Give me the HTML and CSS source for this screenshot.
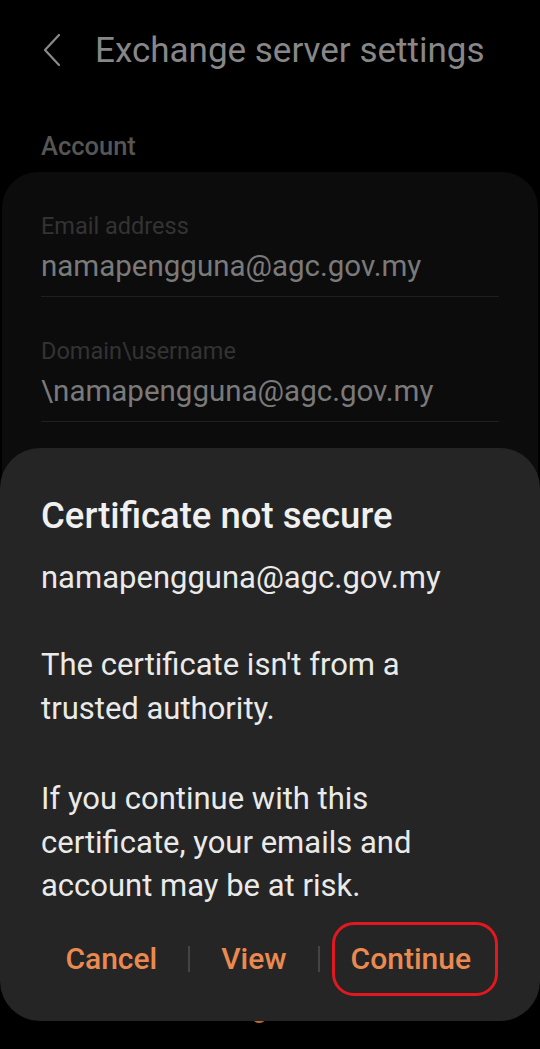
FILE: index.html
```html
<!DOCTYPE html>
<html lang="en">
<head>
<meta charset="utf-8">
<title>Exchange server settings</title>
<link rel="stylesheet" href="styles.css">
</head>
<body>
<div class="screen">
  <header class="appbar">
    <svg class="back" width="24" height="34" viewBox="0 0 24 34" aria-hidden="true">
      <path d="M19 2 L5 17 L19 32" fill="none" stroke="#8a8a8a" stroke-width="2.2" stroke-linecap="round" stroke-linejoin="round"/>
    </svg>
    <h1 class="title">Exchange server settings</h1>
  </header>

  <div class="section-label">Account</div>

  <section class="card">
    <div class="field">
      <div class="field-label">Email address</div>
      <div class="field-value">namapengguna@agc.gov.my</div>
    </div>
    <div class="field">
      <div class="field-label">Domain\username</div>
      <div class="field-value">\namapengguna@agc.gov.my</div>
    </div>
  </section>

  <div class="behind-link">Sign in</div>

  <div class="dialog" role="dialog">
    <h2 class="dialog-title">Certificate not secure</h2>
    <p class="dialog-email">namapengguna@agc.gov.my</p>
    <p class="dialog-text first">The certificate isn't from a trusted authority.</p>
    <p class="dialog-text second">If you continue with this certificate, your emails and account may be at risk.</p>
    <div class="actions">
      <span class="action">Cancel</span>
      <span class="sep"></span>
      <span class="action">View</span>
      <span class="sep"></span>
      <span class="action action-marked">Continue</span>
    </div>
  </div>
</div>
</body>
</html>
```

FILE: styles.css
```css
html, body {
  margin: 0;
  padding: 0;
  background: #000;
}

.screen {
  position: relative;
  width: 540px;
  height: 1049px;
  overflow: hidden;
  background: #000;
  font-family: Roboto, "Noto Sans", "Liberation Sans", sans-serif;
}

.appbar {
  display: flex;
  align-items: center;
  height: 100px;
  padding-left: 40px;
  gap: 31px;
}

.back {
  display: block;
  flex: none;
}

.title {
  margin: 0;
  font-size: 35px;
  font-weight: 400;
  color: #878787;
  line-height: 1;
}

.section-label {
  padding: 34px 0 0 41px;
  height: 38px;
  font-size: 25.5px;
  color: #565656;
  line-height: 1;
  font-weight: 500;
}

.card {
  background: #0c0c0c;
  border-radius: 36px;
  margin: 0 2px;
  padding: 41px 39px 0 39px;
  height: 520px;
}

.field {
  border-bottom: 1px solid #1f1f1f;
  padding-bottom: 12px;
  margin-bottom: 41px;
}

.field-label {
  font-size: 23.5px;
  color: #333;
  line-height: 26px;
}

.field-value {
  margin-top: 9px;
  font-size: 29.5px;
  color: #7a7a7a;
  line-height: 36px;
}

.behind-link {
  position: absolute;
  left: 0;
  right: 0;
  top: 991px;
  text-align: center;
  font-size: 28px;
  color: #c2652f;
}

.dialog {
  position: absolute;
  left: 0;
  right: 0;
  top: 448px;
  height: 573px;
  box-sizing: border-box;
  background: #252525;
  border-radius: 40px;
  padding: 48px 30px 0 41px;
  color: #ececec;
}

.dialog-title {
  margin: 0;
  font-size: 36.5px;
  font-weight: 500;
  line-height: 40px;
  color: #f0f0f0;
}

.dialog-email {
  margin: 22px 0 0 0;
  font-size: 31px;
  line-height: 40px;
  color: #eaeaea;
}

.dialog-text {
  margin: 0;
  font-size: 31px;
  line-height: 43.5px;
  color: #eaeaea;
}

.dialog-text.first {
  margin-top: 45px;
  max-width: 380px;
}

.dialog-text.second {
  margin-top: 47px;
  max-width: 400px;
}

.actions {
  display: flex;
  justify-content: flex-end;
  align-items: center;
  margin-top: 21px;
  margin-right: 9px;
  height: 60px;
}

.action {
  flex: none;
  position: relative;
  padding: 0 31px;
  font-size: 30px;
  font-weight: 500;
  color: #ea8a50;
  line-height: 60px;
}

.action-marked {
  padding-right: 30px;
}

.sep {
  flex: none;
  width: 2px;
  height: 26px;
  background: #444;
}

.action-marked::after {
  content: "";
  position: absolute;
  left: 12px;
  right: 3px;
  top: -7px;
  bottom: -7px;
  border: 3px solid #e01820;
  border-radius: 22px;
}
```
